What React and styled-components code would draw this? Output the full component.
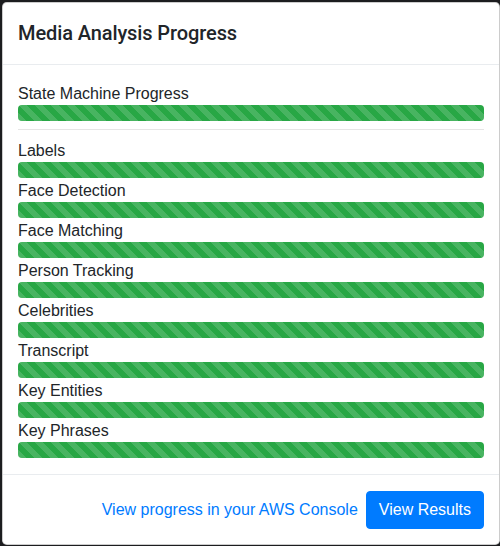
import React from "react";
import styled, { createGlobalStyle } from "styled-components";

const GlobalStyle = createGlobalStyle`
  html, body {
    margin: 0;
    padding: 0;
    background: #1c1d1f;
    height: 546px;
    overflow: hidden;
  }
  body {
    font-family: "Liberation Sans", Arial, sans-serif;
    font-size: 16px;
    line-height: 1.5;
    color: #212529;
  }
  * { box-sizing: border-box; }
`;

const Modal = styled.div`
  margin: 2px 0 0 2px;
  width: 498px;
  background: #fff;
  border: 1px solid rgba(0, 0, 0, 0.2);
  border-radius: 4.8px;
  display: flex;
  flex-direction: column;
`;

const Header = styled.div`
  padding: 15px 16px 16px 15px;
  border-bottom: 1px solid #e9ecef;
`;

const Title = styled.h5`
  margin: 0;
  font-family: Roboto, "Liberation Sans", Arial, sans-serif;
  font-size: 20px;
  font-weight: 500;
  line-height: 30px;
  letter-spacing: -0.1px;
`;

const Body = styled.div`
  padding: 16px 15px 16px;
`;

const Label = styled.div`
  line-height: 26px;
  height: 24px;
`;

const Progress = styled.div`
  height: 16px;
  background: #e9ecef;
  border-radius: 4px;
  overflow: hidden;
  display: flex;
`;

const Bar = styled.div`
  background-color: #28a745;
  background-image: linear-gradient(
    45deg,
    rgba(255, 255, 255, 0.15) 25%,
    transparent 25%,
    transparent 50%,
    rgba(255, 255, 255, 0.15) 50%,
    rgba(255, 255, 255, 0.15) 75%,
    transparent 75%,
    transparent
  );
  background-size: 16px 16px;
  height: 100%;
`;

const Divider = styled.hr`
  margin: 8px 0;
  border: 0;
  border-top: 1px solid rgba(0, 0, 0, 0.1);
`;

const Footer = styled.div`
  display: flex;
  align-items: center;
  justify-content: flex-end;
  gap: 8px;
  padding: 16px 15px 15px;
  border-top: 1px solid #e9ecef;
`;

const Link = styled.a`
  color: #007bff;
  text-decoration: none;
  cursor: pointer;
  line-height: 26px;
`;

const Button = styled.button`
  font-family: inherit;
  font-size: 16px;
  line-height: 26px;
  height: 38px;
  font-weight: 400;
  color: #fff;
  background: #007bff;
  border: 1px solid #007bff;
  border-radius: 4px;
  padding: 5px 12px 5px;
  cursor: pointer;
`;

const Item = ({ label, pct }) => (
  <div>
    <Label>{label}</Label>
    <Progress>
      <Bar style={{ width: `${pct}%` }} />
    </Progress>
  </div>
);

const stages = [
  "Labels",
  "Face Detection",
  "Face Matching",
  "Person Tracking",
  "Celebrities",
  "Transcript",
  "Key Entities",
  "Key Phrases",
];

export default function App() {
  return (
    <>
      <GlobalStyle />
      <Modal>
        <Header>
          <Title>Media Analysis Progress</Title>
        </Header>
        <Body>
          <Item label="State Machine Progress" pct={100} />
          <Divider />
          {stages.map((s) => (
            <Item key={s} label={s} pct={100} />
          ))}
        </Body>
        <Footer>
          <Link>View progress in your AWS Console</Link>
          <Button>View Results</Button>
        </Footer>
      </Modal>
    </>
  );
}
